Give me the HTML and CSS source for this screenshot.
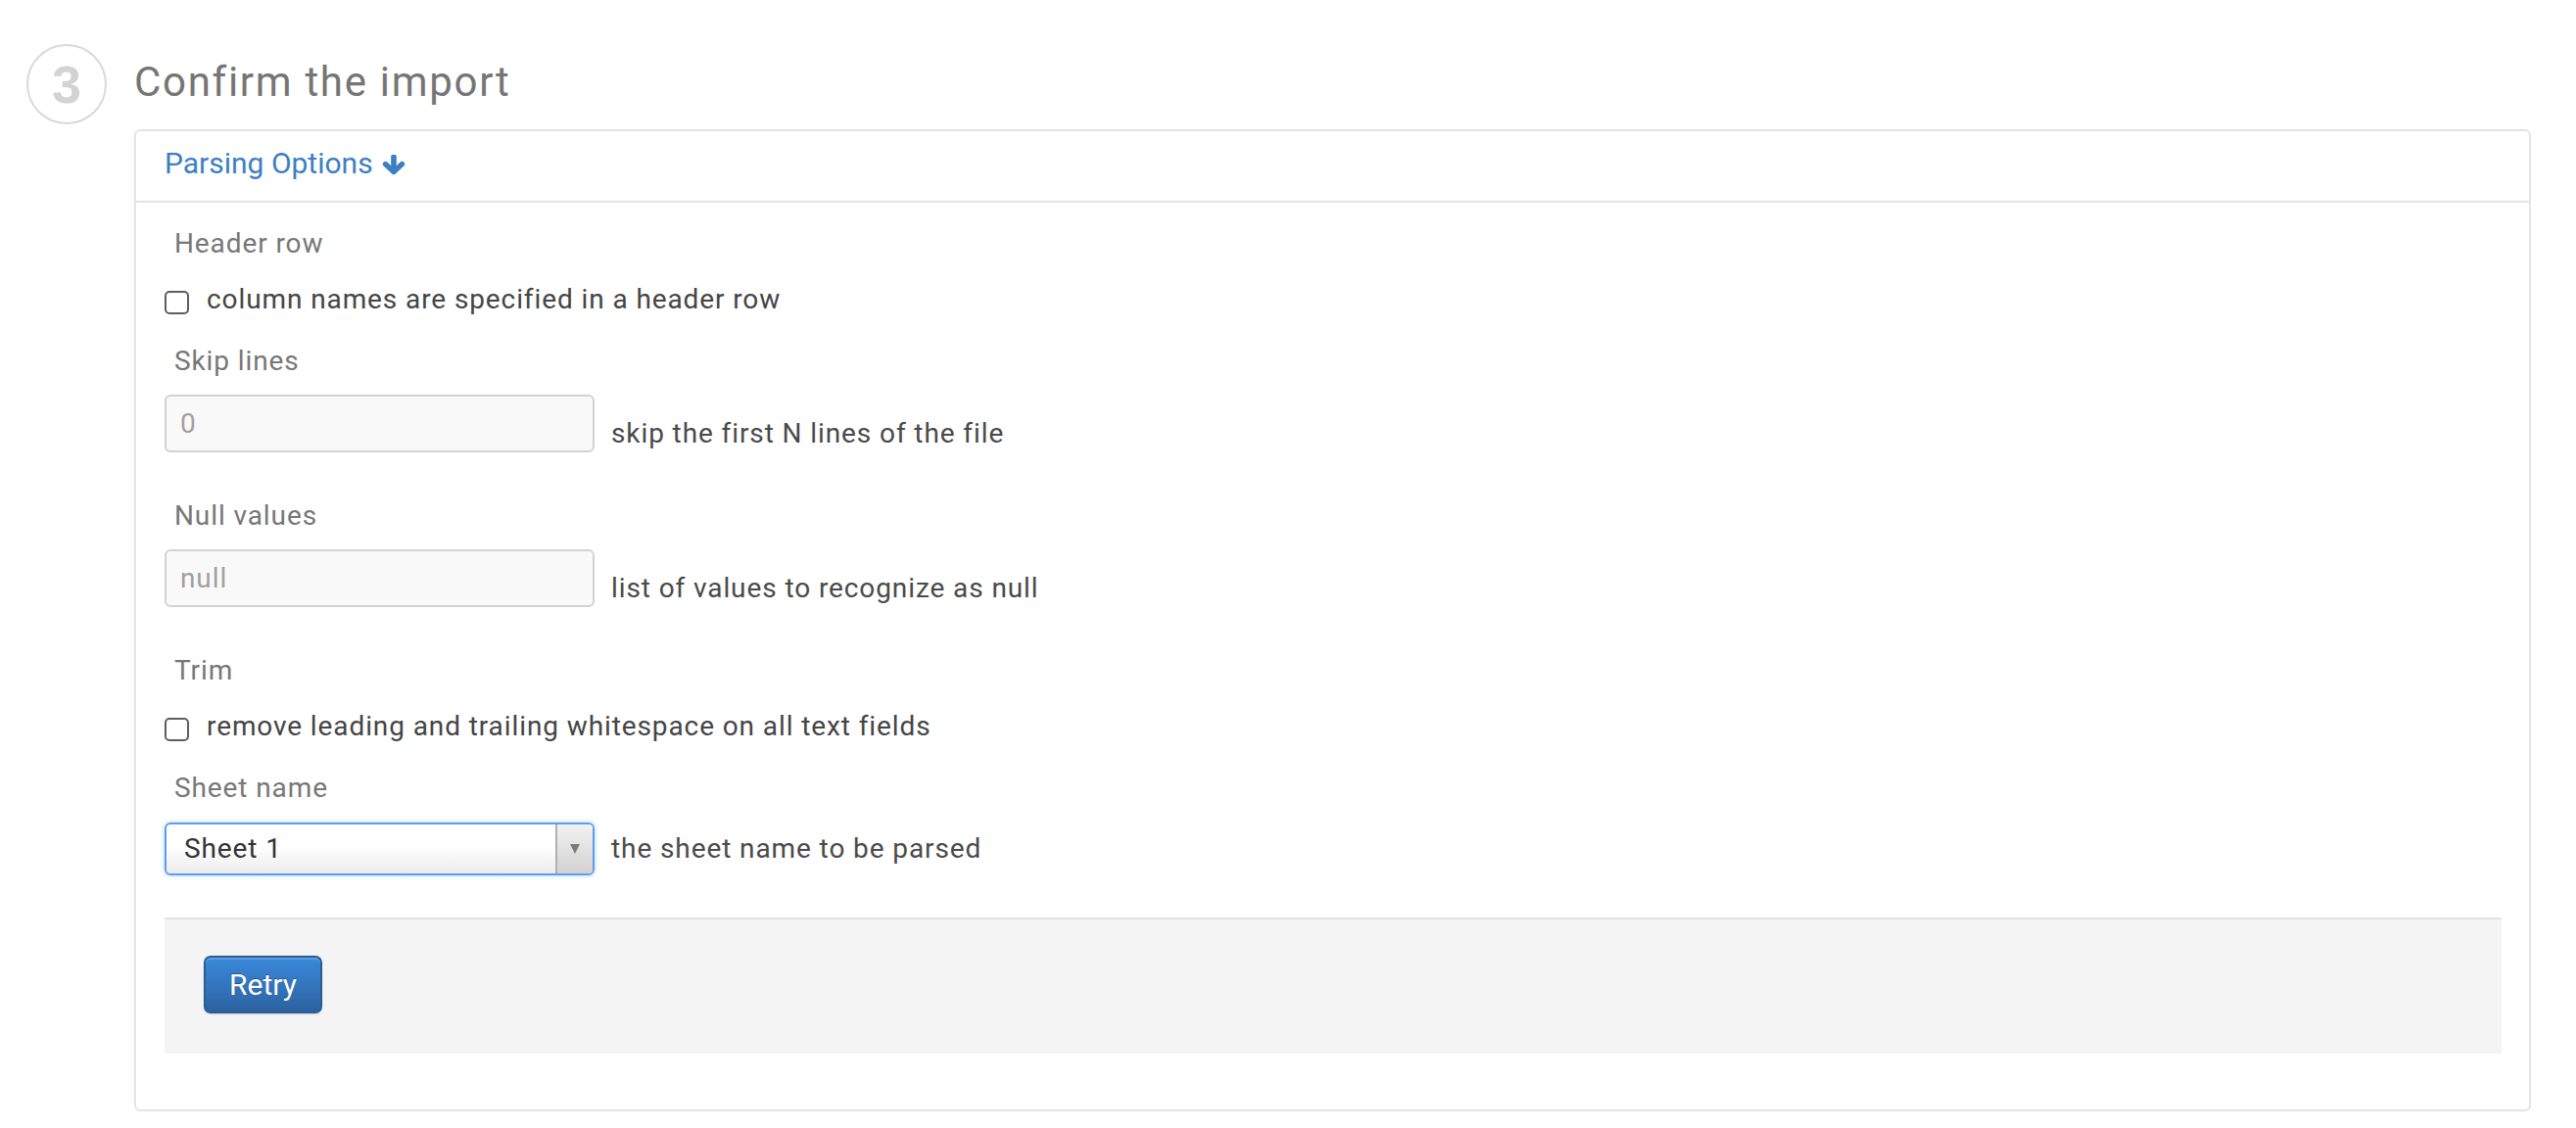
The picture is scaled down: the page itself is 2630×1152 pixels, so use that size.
FILE: index.html
```html
<!DOCTYPE html>
<html>
<head>
<meta charset="utf-8">
<link rel="stylesheet" href="styles.css">
</head>
<body>
<div class="page">
  <div class="step-num">3</div>
  <div class="step-body">
    <h2 class="step-title">Confirm the import</h2>
    <div class="panel">
      <div class="panel-head">
        <a class="toggle">Parsing Options<svg class="arrow" width="24" height="21" viewBox="0 0 24 21"><rect x="9.2" y="0" width="5.6" height="15" rx="1.6" fill="#3d7fc5"/><polyline points="3.5,9.5 12,17.5 20.5,9.5" fill="none" stroke="#3d7fc5" stroke-width="5.4" stroke-linecap="round" stroke-linejoin="round"/></svg></a>
      </div>
      <div class="panel-body">
        <div class="label first">Header row</div>
        <div class="check-row">
          <span class="checkbox"></span>
          <span class="check-text">column names are specified in a header row</span>
        </div>

        <div class="label gap-check">Skip lines</div>
        <div class="input-row">
          <div class="input">0</div>
          <span class="help">skip the first N lines of the file</span>
        </div>

        <div class="label gap-input">Null values</div>
        <div class="input-row">
          <div class="input">null</div>
          <span class="help">list of values to recognize as null</span>
        </div>

        <div class="label gap-input">Trim</div>
        <div class="check-row">
          <span class="checkbox"></span>
          <span class="check-text">remove leading and trailing whitespace on all text fields</span>
        </div>

        <div class="label gap-check">Sheet name</div>
        <div class="select-row">
          <div class="select"><span class="select-value">Sheet 1</span><span class="select-arrow"><span class="tri"></span></span></div>
          <span class="help">the sheet name to be parsed</span>
        </div>

        <div class="actions">
          <button class="btn">Retry</button>
        </div>
      </div>
    </div>
  </div>
</div>
</body>
</html>
```

FILE: styles.css
```css
html, body {
  margin: 0;
  padding: 0;
  background: #ffffff;
  font-family: Roboto, "Liberation Sans", sans-serif;
}

.page {
  display: flex;
  align-items: flex-start;
  padding: 45px 46px 0 27px;
}

.step-num {
  flex: none;
  width: 82px;
  height: 82px;
  box-sizing: border-box;
  border: 2px solid #d9d9d9;
  border-radius: 50%;
  margin-right: 28px;
  display: flex;
  align-items: center;
  justify-content: center;
  font-family: "Liberation Sans", Arial, sans-serif;
  font-weight: bold;
  font-size: 54px;
  color: #d3d3d3;
  line-height: 1;
}

.step-body {
  flex: 1;
  min-width: 0;
}

.step-title {
  margin: 18px 0 27px;
  font-size: 42px;
  line-height: 42px;
  font-weight: normal;
  letter-spacing: 1.7px;
  color: #757575;
}

.panel {
  border: 2px solid #e4e4e4;
  border-radius: 6px;
}

.panel-head {
  display: flex;
  align-items: center;
  height: 66px;
  padding: 0 29px 5px;
  border-bottom: 2px solid #e4e4e4;
}

.toggle {
  display: flex;
  align-items: center;
  font-size: 30px;
  line-height: 36px;
  color: #3d7fc5;
  text-decoration: none;
}

.arrow {
  margin-left: 9px;
  margin-top: 2px;
}

.panel-body {
  padding: 25px 28px 57px 29px;
}

.label {
  font-size: 28px;
  line-height: 34px;
  letter-spacing: 0.9px;
  color: #777777;
  padding-left: 10px;
}

.label.gap-check { margin-top: 29px; }
.label.gap-input { margin-top: 48px; }

.check-row {
  display: flex;
  align-items: flex-start;
  margin-top: 23px;
}

.checkbox {
  flex: none;
  width: 25px;
  height: 24px;
  box-sizing: border-box;
  border: 2px solid #5e5e5e;
  border-radius: 5px;
  margin-top: 8px;
  margin-right: 18px;
  background: #ffffff;
}

.check-text {
  font-size: 28px;
  line-height: 34px;
  letter-spacing: 0.9px;
  color: #454545;
}

.input-row,
.select-row {
  display: flex;
  margin-top: 17px;
}

.input-row {
  align-items: flex-end;
}

.select-row {
  align-items: baseline;
  margin-top: 18px;
}

.input {
  flex: none;
  width: 439px;
  height: 59px;
  box-sizing: border-box;
  border: 2px solid #d2d2d2;
  border-radius: 6px;
  background: #f9f9f9;
  padding-left: 14px;
  font-size: 28px;
  line-height: 55px;
  letter-spacing: 0.9px;
  color: #a0a0a0;
}

.input-row .help {
  margin-bottom: 2px;
}

.help {
  margin-left: 17px;
  font-size: 28px;
  line-height: 34px;
  letter-spacing: 0.9px;
  color: #4a4a4a;
}

.select {
  flex: none;
  width: 439px;
  height: 54px;
  box-sizing: border-box;
  border: 2px solid #5e9cee;
  border-radius: 6px;
  box-shadow: 0 0 5px rgba(94, 156, 238, 0.45);
  background: linear-gradient(#ffffff 0%, #ffffff 45%, #ececec 100%);
  display: flex;
  align-items: baseline;
  overflow: hidden;
}

.select-value {
  flex: 1;
  padding-left: 18px;
  font-size: 28px;
  line-height: 50px;
  letter-spacing: 0.9px;
  color: #333333;
}

.select-arrow {
  align-self: stretch;
  width: 36px;
  border-left: 2px solid #b0b0b0;
  background: linear-gradient(#f2f2f2, #d2d2d2);
  display: flex;
  align-items: center;
  justify-content: center;
}

.tri {
  width: 0;
  height: 0;
  border-left: 5.5px solid transparent;
  border-right: 5.5px solid transparent;
  border-top: 10px solid #7a7a7a;
}

.actions {
  margin-top: 43px;
  border-top: 2px solid #e2e2e2;
  background: #f4f4f4;
  padding: 37px 40px 41px;
}

.btn {
  display: block;
  width: 121px;
  height: 59px;
  box-sizing: border-box;
  border: 2px solid #2a5c96;
  border-radius: 7px;
  background: linear-gradient(#3a89db, #2c62a1);
  box-shadow: inset 0 2px 0 rgba(255, 255, 255, 0.18), 0 1px 2px rgba(0, 0, 0, 0.15);
  color: #ffffff;
  font-family: Roboto, "Liberation Sans", sans-serif;
  font-size: 30px;
  line-height: 55px;
  padding: 0;
  text-align: center;
  text-shadow: 0 -1px 0 rgba(0, 0, 0, 0.3);
}
```
